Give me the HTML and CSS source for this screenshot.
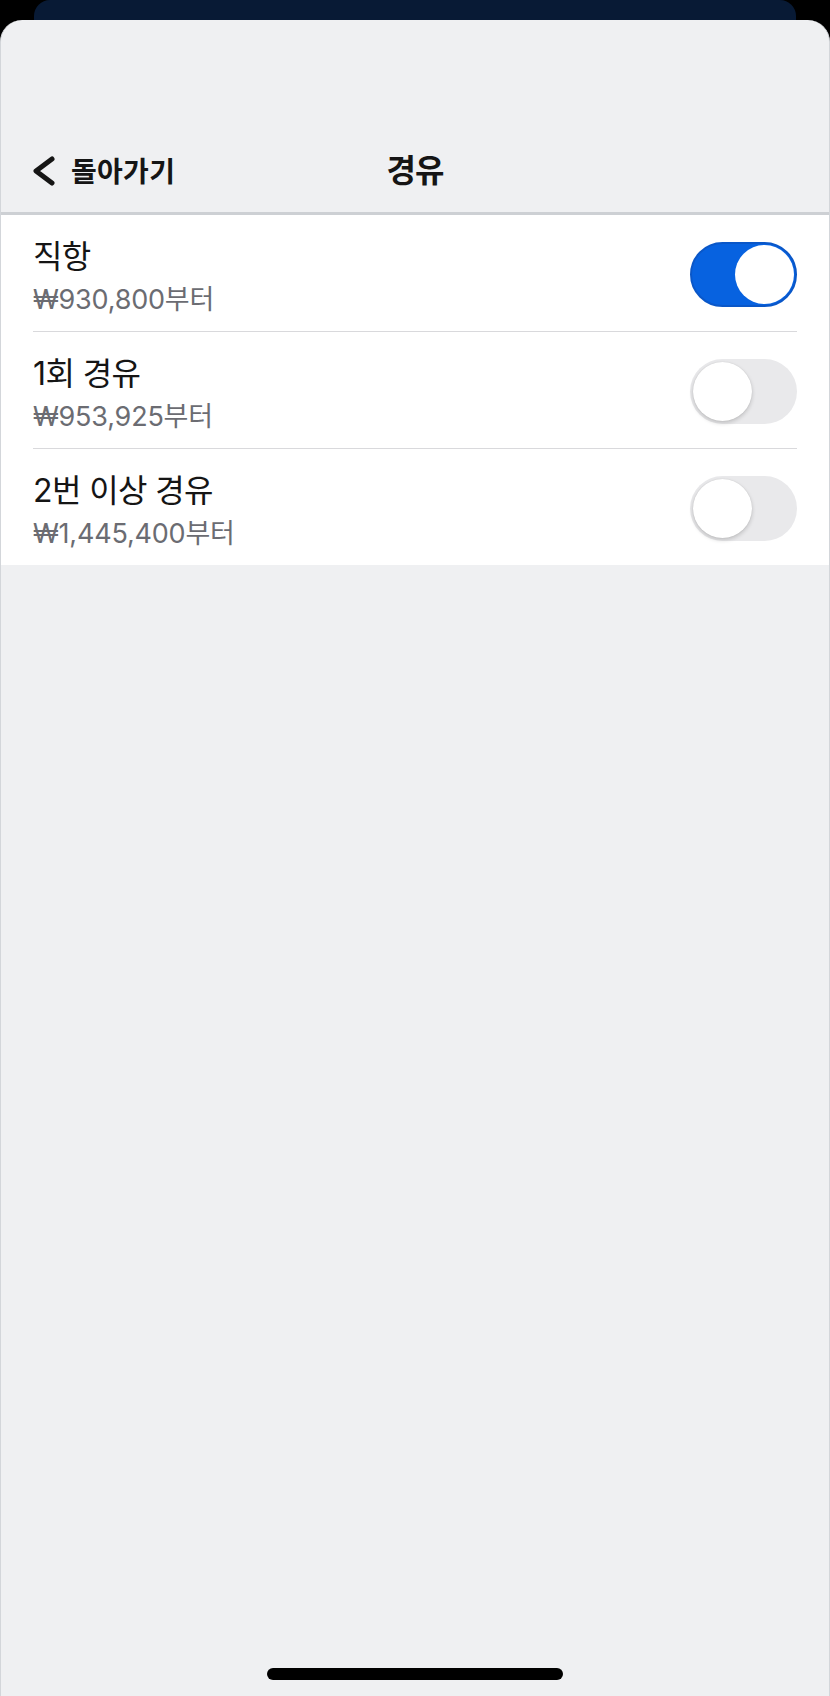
FILE: index.html
```html
<!DOCTYPE html>
<html lang="ko">
<head>
  <meta charset="UTF-8">
  <meta name="viewport" content="width=device-width, initial-scale=1.0">
  <link rel="stylesheet" href="styles.css">
</head>
<body>

  <div class="back-card"></div>

  <div class="sheet">
    <div class="header">
      <div class="nav-bar">
        <a class="back-link" href="#">
          <svg class="chevron" width="25" height="32" viewBox="0 0 25 32">
            <path d="M21 4 L5 16 L21 28" fill="none" stroke="#151515" stroke-width="5" stroke-linecap="round" stroke-linejoin="round"/>
          </svg>
          <span>돌아가기</span>
        </a>
        <h1 class="title">경유</h1>
      </div>
    </div>

    <ul class="stop-list">
      <li class="stop-row">
        <div class="stop-text">
          <div class="stop-name">직항</div>
          <div class="stop-price">₩930,800부터</div>
        </div>
        <span class="toggle on"><span class="knob"></span></span>
      </li>
      <li class="stop-row">
        <div class="stop-text">
          <div class="stop-name">1회 경유</div>
          <div class="stop-price">₩953,925부터</div>
        </div>
        <span class="toggle"><span class="knob"></span></span>
      </li>
      <li class="stop-row">
        <div class="stop-text">
          <div class="stop-name">2번 이상 경유</div>
          <div class="stop-price">₩1,445,400부터</div>
        </div>
        <span class="toggle"><span class="knob"></span></span>
      </li>
    </ul>

    <div class="spacer"></div>
    <div class="home-indicator"></div>
  </div>

</body>
</html>
```

FILE: styles.css
```css
html, body {
  margin: 0;
  padding: 0;
}

body {
  width: 830px;
  height: 1696px;
  overflow: hidden;
  background-color: #000;
  font-family: "Noto Sans CJK KR", "Noto Sans", sans-serif;
  color: #151515;
}

.back-card {
  height: 20px;
  margin: 0 34px;
  background-color: #081a35;
  border-radius: 16px 16px 0 0;
}

.sheet {
  height: 1676px;
  display: flex;
  flex-direction: column;
  background-color: #eff0f2;
  border-radius: 22px 22px 0 0;
  border-right: 1px solid #d3d6da;
  border-left: 1px solid #d3d6da;
  box-sizing: border-box;
}

.header {
  height: 195px;
  display: flex;
  align-items: flex-end;
  border-bottom: 3px solid #cdd0d4;
  box-sizing: border-box;
}

.nav-bar {
  position: relative;
  width: 100%;
  height: 84px;
  display: flex;
  align-items: center;
  justify-content: center;
}

.back-link {
  position: absolute;
  left: 30px;
  top: 0;
  bottom: 0;
  display: flex;
  align-items: center;
  gap: 15px;
  color: #151515;
  text-decoration: none;
  font-size: 28px;
  font-weight: 700;
  letter-spacing: 0.3px;
}

.chevron {
  margin-top: 2px;
}

.title {
  margin: 0 0 4px;
  font-size: 32px;
  font-weight: 700;
  letter-spacing: -1px;
}

.stop-list {
  list-style: none;
  margin: 0;
  padding: 0;
  background-color: #fff;
}

.stop-row {
  height: 117px;
  margin: 0 32px;
  display: flex;
  align-items: center;
  justify-content: space-between;
  border-bottom: 1px solid #d9d9dc;
  box-sizing: border-box;
}

.stop-row:last-child {
  height: 116px;
  border-bottom: none;
}

.stop-text {
  padding-top: 8px;
  font-family: "Inter", "Noto Sans CJK KR", sans-serif;
}

.stop-name {
  font-size: 32px;
  line-height: 42px;
  letter-spacing: -0.6px;
}

.stop-price {
  margin-top: 4px;
  font-size: 27px;
  line-height: 36px;
  color: #6b6c72;
  letter-spacing: -0.2px;
}

.toggle {
  position: relative;
  width: 107px;
  height: 65px;
  border-radius: 33px;
  background-color: #e9e9eb;
  box-sizing: border-box;
  margin-top: 2px;
}

.toggle .knob {
  position: absolute;
  top: 3px;
  left: 3px;
  width: 59px;
  height: 59px;
  border-radius: 50%;
  background-color: #fff;
  box-shadow: 0 2px 4px rgba(0, 0, 0, 0.18), 0 0 1px rgba(0, 0, 0, 0.15);
}

.toggle.on {
  background-color: #0762e0;
  border: 2px solid #0a57c8;
}

.toggle.on .knob {
  top: 1px;
  left: auto;
  right: 1px;
  box-shadow: none;
}

.spacer {
  flex: 1;
}

.home-indicator {
  width: 296px;
  height: 12px;
  margin: 0 auto 16px;
  border-radius: 6px;
  background-color: #000;
}
```
